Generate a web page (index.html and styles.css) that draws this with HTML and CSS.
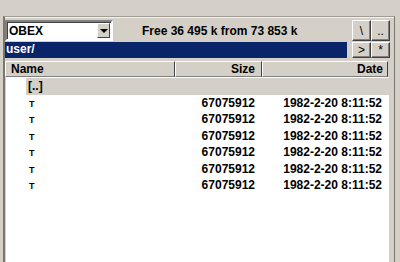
FILE: index.html
```html
<!DOCTYPE html>
<html lang="en">
<head>
    <meta charset="UTF-8">
    <meta name="viewport" content="width=device-width, initial-scale=1.0">
    <title>OBEX</title>
    <link rel="stylesheet" href="styles.css">
</head>
<body>
    <div class="frame">
        <div class="toolbar">
            <div class="drive-row">
                <div class="combo">
                    <span class="combo-value">OBEX</span>
                    <span class="combo-arrow"></span>
                </div>
                <div class="free">Free 36 495 k from 73 853 k</div>
            </div>
            <button class="tool">\</button>
            <button class="tool">..</button>
            <div class="path">user/</div>
            <button class="tool">&gt;</button>
            <button class="tool">*</button>
        </div>

        <div class="panel">
            <div class="header">
                <div class="col-head name">Name</div>
                <div class="col-head size">Size</div>
                <div class="col-head date">Date</div>
            </div>
            <div class="list" id="file-list">
                <div class="row up">
                    <div class="cell name">[..]</div>
                    <div class="cell size"></div>
                    <div class="cell date"></div>
                </div>
            </div>
        </div>
    </div>

    <script>
        const files = [];
        for (let i = 0; i < 6; i++) {
            files.push({ name: 'T', size: '67075912', date: '1982-2-20 8:11:52' });
        }

        const list = document.getElementById('file-list');
        files.forEach(file => {
            list.innerHTML += `
                <div class="row">
                    <div class="cell name"><span class="file-name">${file.name}</span></div>
                    <div class="cell size">${file.size}</div>
                    <div class="cell date">${file.date}</div>
                </div>
            `;
        });
    </script>
</body>
</html>
```

FILE: styles.css
```css
html, body {
    margin: 0;
    height: 262px;
    overflow: hidden;
}
body {
    box-sizing: border-box;
    padding: 16px 5px 0 3px;
    background-color: #d4d0c8;
    font-family: "Liberation Sans", Arial, sans-serif;
    font-size: 12px;
    font-weight: bold;
    color: #000;
}
.frame {
    height: 246px;
    border-top: 1px solid #a09c94;
    border-left: 2px solid #7a7770;
    border-right: 1px solid #7a7770;
    box-shadow: inset 0 1px #f4f2ee;
    padding: 3px 4px 0 0;
}
.toolbar {
    display: grid;
    grid-template-columns: 1fr 19px 19px;
    grid-template-rows: 21px 16px;
    row-gap: 1px;
}
.drive-row {
    display: flex;
    align-items: center;
    margin-right: 5px;
}
.combo {
    width: 104px;
    height: 17px;
    display: flex;
    align-items: center;
    background-color: #fff;
    border: 2px solid;
    border-color: #808080 #ffffff #ffffff #808080;
    box-shadow: inset 1px 1px #404040;
}
.combo-value {
    flex: 1;
    padding-left: 2px;
}
.combo-arrow {
    width: 13px;
    height: 15px;
    margin-right: 1px;
    box-sizing: border-box;
    background-color: #d4d0c8;
    border: 1px solid;
    border-color: #ffffff #404040 #404040 #ffffff;
    position: relative;
}
.combo-arrow::after {
    content: "";
    position: absolute;
    left: 2px;
    top: 5px;
    border-left: 4px solid transparent;
    border-right: 4px solid transparent;
    border-top: 4px solid #000;
}
.free {
    padding-left: 29px;
    padding-top: 1px;
    white-space: nowrap;
}
.path {
    margin-right: 5px;
    background-color: #0a246a;
    color: #fff;
    line-height: 15px;
    padding-left: 1px;
}
.tool {
    margin: 0;
    padding: 0;
    background-color: #d4d0c8;
    border: 1px solid;
    border-color: #ffffff #404040 #404040 #ffffff;
    box-shadow: inset -1px -1px #808080;
    font-family: "Liberation Sans", Arial, sans-serif;
    font-size: 12px;
    font-weight: normal;
    color: #000;
}
.panel {
    margin-top: 3px;
    height: 210px;
    margin-right: 1px;
}
.header {
    display: grid;
    grid-template-columns: 170px 87px 126px;
    height: 16px;
}
.col-head {
    box-sizing: border-box;
    border: 1px solid;
    border-color: #ffffff #404040 #808080 #ffffff;
    line-height: 14px;
}
.col-head.name {
    padding-left: 5px;
}
.col-head.size {
    text-align: right;
    padding-right: 6px;
}
.col-head.date {
    text-align: right;
    padding-right: 4px;
}
.list {
    min-height: 190px;
    margin-left: 1px;
    background-color: #ffffff;
    padding-top: 1px;
}
.row {
    display: grid;
    grid-template-columns: 148px 87px 126px;
    height: 16.5px;
    line-height: 16px;
    padding-left: 20px;
}
.row.up {
    background-color: #d4d0c8;
    background-clip: content-box;
}
.cell.name {
    padding-left: 2px;
}
.file-name {
    font-size: 9px;
    padding-left: 1px;
}
.cell.size {
    text-align: right;
    padding-right: 6px;
}
.cell.date {
    text-align: right;
    padding-right: 5px;
}
```
